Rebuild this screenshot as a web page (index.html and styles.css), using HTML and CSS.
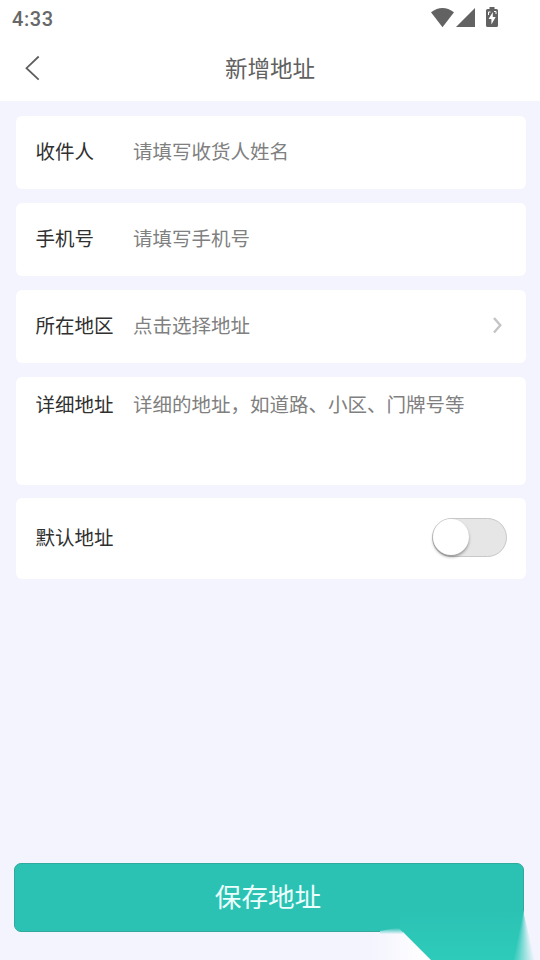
FILE: index.html
```html
<!DOCTYPE html>
<html lang="zh-CN">
<head>
<meta charset="utf-8">
<title>新增地址</title>
<link rel="stylesheet" href="styles.css">
</head>
<body>
<header class="header">
  <div class="status">
    <span class="time">4:33</span>
    <svg class="status-icons" width="70" height="24" viewBox="430 6 70 24" fill="#626262">
      <path d="M431 12.3 Q442.500 3.800 454 12.300 L442.500 27.300Z"/>
      <path d="M456 27 L475 8 V27Z"/>
      <path d="M489.500 7 H494.500 V9 H496.500 Q498 9 498 10.500 V25.500 Q498 27 496.500 27 H487.500 Q486 27 486 25.500 V10.500 Q486 9 487.500 9 H489.500Z"/>
      <path fill="#fff" d="M492.800 12 L488.600 18.900 H491.400 V24.500 L495.700 17 H492.800Z"/>
      <path stroke="#fff" fill="none" d="M488.500 15 V12 H490.500 M494 11.500 H496 V14"/>
    </svg>
  </div>
  <div class="nav">
    <svg class="back" width="20" height="28" viewBox="22 54 20 28"><path d="M38.700 56.500 L26.500 68.200 L38.700 79.700" fill="none" stroke="#5e5e5e" stroke-width="1.800"/></svg>
    <h1 class="title">新增地址</h1>
  </div>
</header>
<main class="form">
  <div class="card"><span class="label">收件人</span><span class="hint">请填写收货人姓名</span></div>
  <div class="card"><span class="label">手机号</span><span class="hint">请填写手机号</span></div>
  <div class="card"><span class="label">所在地区</span><span class="hint">点击选择地址</span>
    <svg class="arrow" width="12" height="20" viewBox="491 315 12 20"><path d="M494 318 L500.300 325.300 L494 332.500" fill="none" stroke="#c4c4c6" stroke-width="2.400"/></svg>
  </div>
  <div class="card card-detail"><span class="label">详细地址</span><span class="hint">详细的地址，如道路、小区、门牌号等</span></div>
  <div class="card card-default"><span class="label">默认地址</span><span class="switch"><span class="knob"></span></span></div>
</main>
<footer class="footer">
  <button class="save">保存地址</button>
  <svg class="flare" width="180" height="70" viewBox="360 890 180 70">
    <defs>
      <linearGradient id="teal" x1="0" y1="0" x2="0" y2="1"><stop offset="0" stop-color="#2bc2b4"/><stop offset="1" stop-color="#2ecbba"/></linearGradient>
      <linearGradient id="pale" x1="0" y1="0" x2="1" y2="0"><stop offset="0" stop-color="#fff" stop-opacity="0"/><stop offset="0.900" stop-color="#fff"/></linearGradient>
      <linearGradient id="tip" x1="0" y1="0" x2="0" y2="1"><stop offset="0" stop-color="#2bc2b4"/><stop offset="1" stop-color="#f3f4fe"/></linearGradient>
    </defs>
    <path fill="url(#pale)" d="M370 932 H403 L431 960 H370Z"/>
    <path fill="url(#teal)" d="M400 910 H523 L535 960 H431 L400 929Z"/>
    <path fill="url(#tip)" d="M380 931 L396 928 H399 L404.500 934 H380Z"/>
  </svg>
  <span class="flare-edge"></span>
</footer>
</body>
</html>
```

FILE: styles.css
```css
* { box-sizing: border-box; }
body {
  margin: 0;
  width: 540px;
  height: 960px;
  overflow: hidden;
  display: flex;
  flex-direction: column;
  background: #f3f4fe;
  font-family: "Noto Sans CJK SC", sans-serif;
  font-weight: 400;
}
.header { height: 101px; background: #fff; }
.status {
  height: 37px;
  padding: 0 40px 2px 12px;
  display: flex;
  justify-content: space-between;
  align-items: center;
}
.time { font: 500 20px Roboto, sans-serif; color: #686868; letter-spacing: 0.6px; padding-top: 2px; }
.nav {
  height: 64px;
  padding: 0 22px;
  display: grid;
  grid-template-columns: 20px 1fr 20px;
  align-items: center;
}
.back { margin-bottom: 2px; }
.title {
  margin: 0 0 4px;
  text-align: center;
  font-size: 22.5px;
  line-height: 32px;
  font-weight: 400;
  color: #606060;
}
.form {
  padding: 15px 14px 0 16px;
  display: flex;
  flex-direction: column;
  gap: 14px;
}
.card {
  height: 73px;
  padding: 0 20px 3px 19.5px;
  display: flex;
  align-items: center;
  background: #fff;
  border-radius: 6px;
  font-size: 19.5px;
  line-height: 28px;
}
.label { width: 97.5px; color: #303030; }
.hint { color: #808080; }
.arrow { margin-left: auto; margin-right: 3px; }
.card-detail { height: 108px; align-items: flex-start; padding-top: 13px; }
.card-default { height: 81px; margin-top: -1px; padding-right: 19px; justify-content: space-between; }
.switch {
  width: 75px;
  height: 39px;
  margin-top: 1px;
  border: 1px solid #c8c8c8;
  border-radius: 20px;
  background: #e6e6e6;
}
.knob {
  display: block;
  width: 36px;
  height: 36px;
  border-radius: 50%;
  background: #fff;
  box-shadow: 0 2px 3px rgba(0, 0, 0, 0.35);
}
.footer { position: relative; margin-top: auto; height: 97px; padding: 0 16px 0 14px; }
.save {
  display: block;
  width: 100%;
  height: 69px;
  padding: 0 2px 3px 0;
  border: 1px solid #32a99e;
  border-radius: 7px;
  background: #2bc2b4;
  color: #ecfffc;
  font: 400 26.6px/40px "Noto Sans CJK SC", sans-serif;
}
.flare { position: absolute; right: 0; bottom: 0; }
.flare-edge {
  position: absolute;
  right: 0;
  bottom: 0;
  width: 30px;
  height: 52px;
  background: conic-gradient(at 14px 0, #f3f4fe 168deg, rgba(243, 244, 254, 0) 192deg);
}
```
